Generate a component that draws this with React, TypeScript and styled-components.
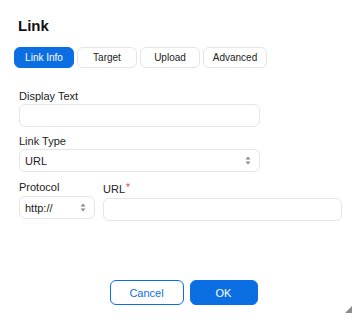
import React from "react";
import styled, { createGlobalStyle } from "styled-components";

const GlobalStyle = createGlobalStyle`
  body {
    margin: 0;
    background: #ffffff;
    font-family: "Liberation Sans", Arial, sans-serif;
  }
`;

const blue = "#0b6fe3";

const Dialog = styled.div`
  position: relative;
  width: 360px;
  height: 320px;
  box-sizing: border-box;
  padding: 17px 18px 0 19px;
  display: flex;
  flex-direction: column;
  background: #fff;
  color: #1b1b1b;
`;

const Title = styled.h1`
  margin: 0 0 0 -1px;
  font-size: 15px;
  line-height: 18px;
  font-weight: bold;
  color: #111;
`;

const Tabs = styled.div`
  display: flex;
  gap: 3px;
  margin: 12px 0 0 -5px;
`;

const Tab = styled.button<{ $active?: boolean; $w: number }>`
  width: ${p => p.$w}px;
  height: 21px;
  padding: 0;
  border-radius: 6px;
  border: 1px solid ${p => (p.$active ? blue : "#e4e4e4")};
  background: ${p => (p.$active ? blue : "#fff")};
  color: ${p => (p.$active ? "#fff" : "#222")};
  font-family: inherit;
  font-size: 10px;
`;

const Field = styled.div<{ $grow?: boolean; $w?: number; $gap: number }>`
  display: flex;
  flex-direction: column;
  margin-top: ${p => p.$gap}px;
  ${p => (p.$grow ? "flex: 1;" : "")}
  ${p => (p.$w ? `width: ${p.$w}px;` : "")}
`;

const Label = styled.label<{ $space: number }>`
  font-size: 11px;
  line-height: 13px;
  color: #222;
  margin-bottom: ${p => p.$space}px;
`;

const Star = styled.span`
  color: #e0393e;
  vertical-align: 2px;
  font-size: 10px;
  margin-left: 1px;
`;

const Box = styled.div<{ $w?: number }>`
  box-sizing: border-box;
  height: 23px;
  ${p => (p.$w ? `width: ${p.$w}px;` : "width: 100%;")}
  border: 1px solid #e6e6e6;
  border-radius: 6px;
  background: #fff;
  display: flex;
  align-items: center;
  justify-content: space-between;
  padding: 0 8px 0 5px;
  font-size: 11px;
  color: #1b1b1b;
`;

const Row = styled.div`
  display: flex;
  gap: 8px;
  margin-top: 9px;
`;

const Footer = styled.div`
  margin-top: auto;
  margin-bottom: 15px;
  display: flex;
  justify-content: center;
  gap: 6px;
  padding-left: 6px;
`;

const Button = styled.button<{ $primary?: boolean }>`
  box-sizing: border-box;
  height: 25px;
  width: ${p => (p.$primary ? 68 : 74)}px;
  border-radius: 6px;
  border: 1px solid ${blue};
  background: ${p => (p.$primary ? blue : "#fff")};
  color: ${p => (p.$primary ? "#fff" : blue)};
  font-family: inherit;
  font-size: 11px;
`;

const Grip = styled.svg`
  position: absolute;
  right: 8px;
  bottom: 7px;
`;

const Arrows = () => (
  <svg width="6" height="9" viewBox="0 0 6 9">
    <path d="M3 0.5 L5.5 3.5 H0.5 Z" fill="#8a8a8a" />
    <path d="M3 8.5 L5.5 5.5 H0.5 Z" fill="#8a8a8a" />
  </svg>
);

export default function App() {
  return (
    <>
      <GlobalStyle />
      <Dialog>
        <Title>Link</Title>
        <Tabs>
          <Tab $active $w={60}>Link Info</Tab>
          <Tab $w={60}>Target</Tab>
          <Tab $w={60}>Upload</Tab>
          <Tab $w={64}>Advanced</Tab>
        </Tabs>

        <Field $gap={22}>
          <Label $space={1}>Display Text</Label>
          <Box $w={241} />
        </Field>

        <Field $gap={8}>
          <Label $space={1}>Link Type</Label>
          <Box $w={241}>
            URL
            <Arrows />
          </Box>
        </Field>

        <Row>
          <Field $w={76} $gap={0}>
            <Label $space={2}>Protocol</Label>
            <Box>
              http://
              <Arrows />
            </Box>
          </Field>
          <Field $grow $gap={0}>
            <Label $space={2}>
              URL<Star>*</Star>
            </Label>
            <Box />
          </Field>
        </Row>

        <Footer>
          <Button>Cancel</Button>
          <Button $primary>OK</Button>
        </Footer>

        <Grip width="7" height="7" viewBox="0 0 7 7">
          <path d="M7 0 V7 H0 Z" fill="#8c8c8c" />
        </Grip>
      </Dialog>
    </>
  );
}
